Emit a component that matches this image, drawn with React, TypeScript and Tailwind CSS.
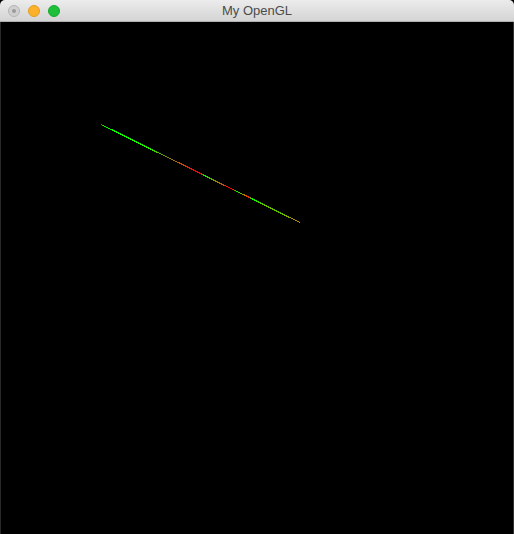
const STOPS: [number, string][] = [
    [0, '#ff0000'],
    [0.01, '#00ff00'],
    [0.246, '#22ee00'],
    [0.32, '#6a9600'],
    [0.4, '#cc5000'],
    [0.47, '#ff0000'],
    [0.5, '#ff0000'],
    [0.52, '#00ff00'],
    [0.56, '#66aa00'],
    [0.61, '#cc5500'],
    [0.64, '#ff0000'],
    [0.66, '#ff0000'],
    [0.68, '#00ff00'],
    [0.71, '#88aa00'],
    [0.74, '#ff2200'],
    [0.76, '#00ff00'],
    [0.82, '#66bb00'],
    [0.9, '#55bb00'],
    [1, '#cc8800'],
];

function TrafficLights() {
    return (
        <div className="flex items-center gap-[8px] pl-[8px]">
            <div className="w-[12px] h-[12px] rounded-full bg-[#d0d0d0] border border-[#b5b5b5] flex items-center justify-center">
                <div className="w-[4px] h-[4px] rounded-full bg-[#9a9a9a]" />
            </div>
            <div className="w-[12px] h-[12px] rounded-full bg-[#fdb12b] border border-[#e29e22]" />
            <div className="w-[12px] h-[12px] rounded-full bg-[#1ec03a] border border-[#17a92f]" />
        </div>
    );
}

export default function App() {
    return (
        <div className="w-[514px] h-[534px] bg-black flex flex-col overflow-hidden" style={{ fontFamily: '"Liberation Sans", Arial, sans-serif' }}>
            <div className="relative h-[22px] shrink-0 rounded-t-[5px] bg-gradient-to-b from-[#ececec] to-[#d4d4d4] border-b border-[#b0b0b0] flex items-center">
                <TrafficLights />
                <div className="absolute inset-0 flex items-center justify-center text-[13px] text-[#4c4c4c]">
                    My OpenGL
                </div>
            </div>
            <div className="flex-1 bg-black border-l border-[#2a2a2a] border-r border-r-[#333]">
                <svg width="512" height="511" viewBox="0 0 512 511" className="block" shapeRendering="crispEdges">
                    <defs>
                        <linearGradient id="ln" gradientUnits="userSpaceOnUse" x1="100" y1="0" x2="299" y2="0">
                            {STOPS.map(([o, c]) => (
                                <stop key={o} offset={o} stopColor={c} />
                            ))}
                        </linearGradient>
                    </defs>
                    <line x1="100" y1="102.5" x2="299" y2="200.5" stroke="url(#ln)" strokeWidth="1.2" />
                </svg>
            </div>
        </div>
    );
}
